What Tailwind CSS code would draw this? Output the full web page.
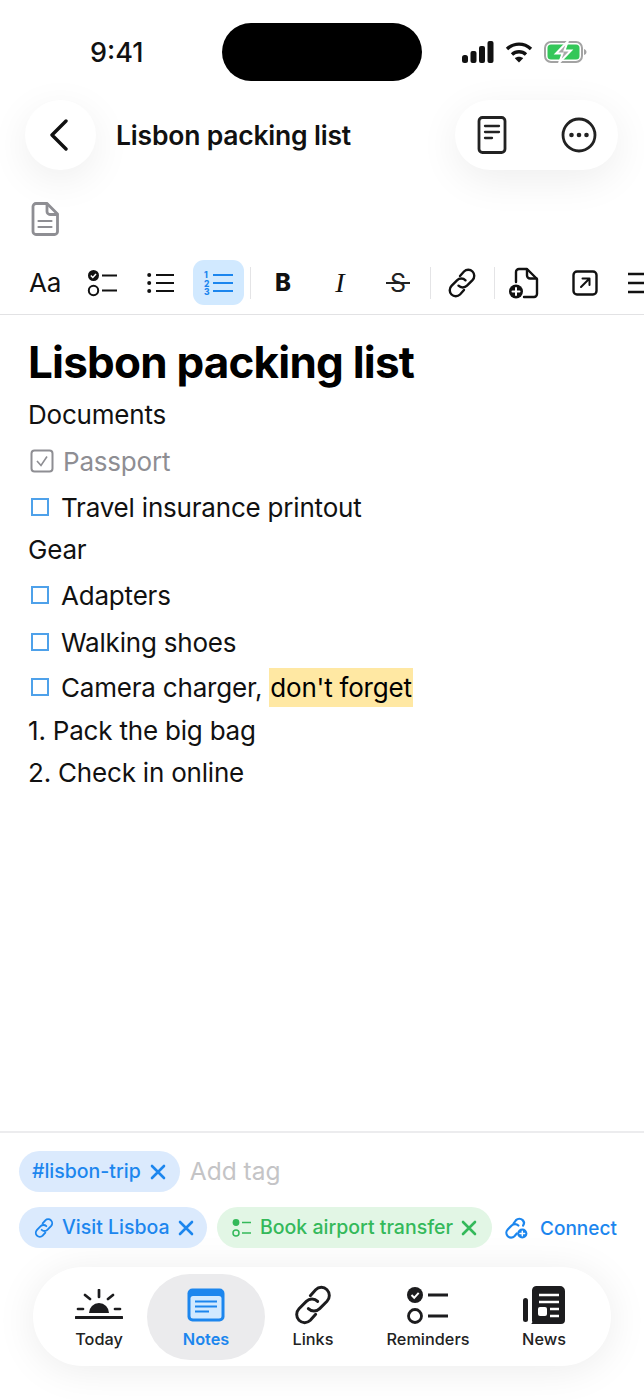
<!DOCTYPE html>
<html lang="en">
  <head>
    <meta charset="UTF-8" />
    <meta name="viewport" content="width=device-width, initial-scale=1.0" />
    <title>Lisbon packing list</title>
    <script src="https://cdn.jsdelivr.net/npm/@tailwindcss/browser@4"></script>
  </head>
  <body class="bg-white font-['Inter',sans-serif] text-black">
    <div class="w-[644px] h-[1400px] flex flex-col overflow-hidden">
      <!-- status bar -->
      <div class="h-[100px] shrink-0 pt-[23px] pl-[90px] pr-[57px] flex items-start">
        <span class="mt-[13px] w-[55px] text-[27px] leading-[33px] font-medium text-[#111]">9:41</span>
        <div class="ml-[77px] w-[200px] h-[58px] rounded-full bg-black"></div>
        <div class="ml-auto mt-[18px] flex items-center gap-[11px]">
          <svg width="32" height="22" viewBox="0 0 32 22" fill="#111">
            <rect x="0" y="14" width="6" height="8" rx="2.5" />
            <rect x="8.5" y="10" width="6" height="12" rx="2" />
            <rect x="17" y="5" width="6" height="17" rx="2" />
            <rect x="25.5" y="0" width="6" height="22" rx="2" />
          </svg>
          <svg width="28" height="22" viewBox="0 0 28 22" fill="none" stroke="#111" stroke-width="3.4">
            <path d="M2 8c7-6.500 17-6.500 24 0" />
            <path d="M7 13.500c4-3.700 10-3.700 14 0" />
            <path d="M14 21.500l-4.200-4.200c2.300-2 6.100-2 8.400 0z" fill="#111" stroke="none" />
          </svg>
          <svg width="43" height="22" viewBox="0 0 43 22" fill="none">
            <rect x="1" y="1" width="37" height="20" rx="6" stroke="#a3a3a3" stroke-width="2" />
            <rect x="3.500" y="3.500" width="32" height="15" rx="3.500" fill="#34c759" />
            <path d="M40 8v6c1.500-.5 2.500-1.500 2.500-3s-1-2.500-2.500-3z" fill="#a3a3a3" />
            <path d="M24 0L12 12.500h6.500L15 22l12-12.500h-6.500z" fill="#a9a9a9" stroke="#fff" stroke-width="2" />
          </svg>
        </div>
      </div>

      <!-- nav -->
      <div class="h-[70px] shrink-0 pl-[25px] pr-[26px] flex items-center">
        <button class="w-[71px] h-[70px] pr-[3px] rounded-full bg-white shadow-[0_10px_40px_rgba(0,0,0,0.07)] flex items-center justify-center">
          <svg width="20" height="32" viewBox="0 0 20 32" fill="none" stroke="#111" stroke-width="3.400" stroke-linecap="round" stroke-linejoin="round">
            <path d="M17 2L3 16l14 14" />
          </svg>
        </button>
        <span class="ml-[20px] text-[26.500px] leading-[34px] font-semibold tracking-[-0.2px] text-[#111]">Lisbon packing list</span>
        <div class="ml-auto w-[163px] h-[70px] rounded-full bg-white shadow-[0_10px_40px_rgba(0,0,0,0.07)] pl-[21px] pr-[21px] flex items-center justify-between">
          <svg width="32" height="38" viewBox="0 0 32 38" fill="none" stroke="#222" stroke-width="2.800" stroke-linecap="round">
            <rect x="3" y="1.500" width="26" height="35" rx="3.500" />
            <path d="M9 10h14M9 16h14M9 22h7" stroke-width="2.300" />
          </svg>
          <svg width="36" height="36" viewBox="0 0 36 36" fill="none">
            <circle cx="18" cy="18" r="16" stroke="#222" stroke-width="2.800" />
            <circle cx="10.500" cy="18" r="2.300" fill="#222" />
            <circle cx="18" cy="18" r="2.300" fill="#222" />
            <circle cx="25.500" cy="18" r="2.300" fill="#222" />
          </svg>
        </div>
      </div>

      <!-- note type icon -->
      <div class="h-[90px] shrink-0 pl-[31px] pt-[32px]">
        <svg width="28" height="34" viewBox="0 0 28 34" fill="none" stroke="#8e8e93" stroke-width="2.800" stroke-linecap="round" stroke-linejoin="round">
          <path d="M5 1.500h11L26.500 12v17.500a3 3 0 0 1-3 3H5a3 3 0 0 1-3-3v-25a3 3 0 0 1 3-3z" />
          <path d="M16 2v7.500a3 3 0 0 0 3 3h7" />
          <path d="M7.500 19h13M7.500 25h13" stroke-width="2.200" />
        </svg>
      </div>

      <!-- toolbar -->
      <div class="h-[55px] shrink-0 border-b border-[#e2e2e4] overflow-hidden">
        <div class="h-[45px] pl-[29px] flex items-center w-[680px]">
          <span class="w-[32px] text-[26px] leading-[30px] text-[#111] tracking-[-0.2px]">Aa</span>
          <svg class="ml-[26px]" width="32" height="28" viewBox="0 0 32 28" fill="none" stroke="#111">
            <circle cx="6.500" cy="6.500" r="5.500" fill="#111" stroke="none" />
            <path d="M3.800 6.500l2 2 3.200-3.500" stroke="#fff" stroke-width="1.500" />
            <circle cx="6.500" cy="21.500" r="4.700" stroke-width="2" />
            <path d="M15 6.500h15M15 21.500h15" stroke-width="2" />
          </svg>
          <svg class="ml-[28px]" width="28" height="22" viewBox="0 0 28 22" fill="#111" stroke="#111">
            <circle cx="2.200" cy="3" r="2" stroke="none" />
            <circle cx="2.200" cy="11" r="2" stroke="none" />
            <circle cx="2.200" cy="19" r="2" stroke="none" />
            <path d="M9 3h18M9 11h18M9 19h18" stroke-width="2" />
          </svg>
          <div class="ml-[18px] w-[51px] h-[45px] shrink-0 rounded-[11px] bg-[#d1e9ff] flex items-center justify-center">
            <svg width="30" height="28" viewBox="0 0 30 28" fill="none" stroke="#1c86ee">
              <text x="0" y="9" font-size="8.500" font-weight="800" fill="#1c86ee" stroke="none" font-family="Inter">1</text>
              <text x="0" y="17.500" font-size="8.500" font-weight="800" fill="#1c86ee" stroke="none" font-family="Inter">2</text>
              <text x="0" y="26" font-size="8.500" font-weight="800" fill="#1c86ee" stroke="none" font-family="Inter">3</text>
              <path d="M9 6h20M9 14h20M9 22h20" stroke-width="2" />
            </svg>
          </div>
          <div class="ml-[6px] w-px h-[32px] bg-[#e4e4e6]"></div>
          <span class="ml-[22px] w-[20px] text-center text-[24px] leading-[30px] font-extrabold text-[#111]">B</span>
          <span class="ml-[37px] w-[20px] text-center text-[28px] leading-[30px] italic font-['Liberation_Serif',serif] text-[#111]">I</span>
          <span class="relative ml-[36px] w-[24px] text-center text-[25px] leading-[30px] text-[#222]">S<span class="absolute left-0 right-0 top-[14px] h-[2px] bg-[#222]"></span></span>
          <div class="ml-[20px] w-px h-[32px] bg-[#e4e4e6]"></div>
          <svg class="ml-[16px]" width="30" height="30" viewBox="0 0 30 30" fill="none" stroke="#111" stroke-width="2.400" stroke-linecap="round">
            <path d="M13 8l4-4.500a6 6 0 0 1 8.500 0 6.300 6.300 0 0 1 0 8.700l-5.500 5.500a6 6 0 0 1-8.500 0" />
            <path d="M17 22l-4 4.500a6 6 0 0 1-8.500 0 6.300 6.300 0 0 1 0-8.700l5.500-5.500a6 6 0 0 1 8.500 0" />
          </svg>
          <div class="ml-[17px] w-px h-[32px] bg-[#e4e4e6]"></div>
          <svg class="ml-[14px]" width="30" height="32" viewBox="0 0 30 32" fill="none" stroke="#111" stroke-width="2.400" stroke-linecap="round" stroke-linejoin="round">
            <path d="M7 15V5a3 3 0 0 1 3-3h8l10 10v15a3 3 0 0 1-3 3H15" />
            <path d="M18 2.500v6a3 3 0 0 0 3 3h6.500" />
            <circle cx="7" cy="24.500" r="7" fill="#111" stroke="none" />
            <path d="M7 21v7M3.500 24.500h7" stroke="#fff" stroke-width="2" />
          </svg>
          <svg class="ml-[33px]" width="26" height="26" viewBox="0 0 26 26" fill="none" stroke="#111" stroke-width="2.400" stroke-linecap="round" stroke-linejoin="round">
            <rect x="1.500" y="1.500" width="23" height="23" rx="3.500" />
            <path d="M9 17l8-8M10.500 8.500H17.500V15" stroke-width="2" />
          </svg>
          <svg class="ml-[30px]" width="30" height="24" viewBox="0 0 30 24" fill="none" stroke="#111" stroke-width="2.400">
            <path d="M0 3h30M0 12h30M0 21h30" />
          </svg>
        </div>
      </div>

      <!-- note body -->
      <div class="flex-1 pl-[28px] text-[26px] text-[#111] tracking-[-0.2px]">
        <h1 class="pt-[19px] text-[44px] leading-[56px] font-bold tracking-[-0.8px] text-black">Lisbon packing list</h1>
        <p class="h-[41px] leading-[41px] mt-[4px]">Documents</p>
        <div class="h-[46px] mt-[3px] flex items-center text-[#8e8e93] gap-[9px] pl-[2px]">
          <svg width="24" height="24" viewBox="0 0 24 24" fill="none" stroke="#8e8e93" stroke-width="2">
            <rect x="1.500" y="1.500" width="21" height="21" rx="3" />
            <path d="M7 12l4 4.500 6-9" stroke-width="1.600" />
          </svg>
          <span>Passport</span>
        </div>
        <div class="h-[46px] flex items-center gap-[12px] pl-[3px]">
          <span class="w-[18px] h-[18px] border-2 border-[#4ea1ea]"></span>
          <span>Travel insurance printout</span>
        </div>
        <p class="h-[38px] leading-[38px] mt-[1px]">Gear</p>
        <div class="h-[46px] flex items-center gap-[12px] pl-[3px] mt-[3px]">
          <span class="w-[18px] h-[18px] border-2 border-[#4ea1ea]"></span>
          <span>Adapters</span>
        </div>
        <div class="h-[46px] flex items-center gap-[12px] pl-[3px] mt-[1px]">
          <span class="w-[18px] h-[18px] border-2 border-[#4ea1ea]"></span>
          <span>Walking shoes</span>
        </div>
        <div class="h-[46px] flex items-center gap-[12px] pl-[3px] mt-[-1px]">
          <span class="w-[18px] h-[18px] border-2 border-[#4ea1ea]"></span>
          <span>Camera charger, <span class="inline-block h-[39px] leading-[39px] px-[1px] bg-[#ffe8a3] text-black">don't forget</span></span>
        </div>
        <p class="h-[42px] leading-[42px]">1. Pack the big bag</p>
        <p class="h-[42px] leading-[42px]">2. Check in online</p>
      </div>

      <!-- tags and connections -->
      <div class="h-[269px] shrink-0 border-t-2 border-[#ececee] pt-[18px] whitespace-nowrap">
        <div class="pl-[19px] flex items-center">
          <div class="h-[41px] rounded-full bg-[#dbeafd] pl-[13px] pr-[14px] flex items-center gap-[9px] text-[19.500px] font-medium text-[#1c86ee]">
            <span>#lisbon-trip</span>
            <svg width="16" height="16" viewBox="0 0 16 16" stroke="#1c86ee" stroke-width="2.600" stroke-linecap="round"><path d="M2 2l12 12M14 2L2 14" /></svg>
          </div>
          <span class="ml-[10px] text-[24.500px] text-[#c4c4c6]">Add tag</span>
        </div>
        <div class="mt-[15px] pl-[19px] flex items-center">
          <div class="h-[41px] w-[188px] shrink-0 rounded-full bg-[#dbeafd] pl-[15px] flex items-center text-[19.500px] font-medium text-[#1c86ee]">
            <svg width="20" height="20" viewBox="0 0 30 30" fill="none" stroke="#1c86ee" stroke-width="2.800" stroke-linecap="round">
              <path d="M13 8l4-4.500a6 6 0 0 1 8.500 0 6.300 6.300 0 0 1 0 8.700l-5.500 5.500a6 6 0 0 1-8.500 0" />
              <path d="M17 22l-4 4.500a6 6 0 0 1-8.500 0 6.300 6.300 0 0 1 0-8.700l5.500-5.500a6 6 0 0 1 8.500 0" />
            </svg>
            <span class="ml-[8px]">Visit Lisboa</span>
            <svg class="ml-[8px]" width="16" height="16" viewBox="0 0 16 16" stroke="#1c86ee" stroke-width="2.600" stroke-linecap="round"><path d="M2 2l12 12M14 2L2 14" /></svg>
          </div>
          <div class="ml-[10px] h-[41px] w-[275px] shrink-0 rounded-full bg-[#e2f6e5] pl-[15px] flex items-center text-[19.500px] font-medium text-[#34b95a]">
            <svg width="20" height="20" viewBox="0 0 20 20" fill="none" stroke="#34b95a">
              <circle cx="4" cy="4.500" r="3.400" fill="#34b95a" stroke="none" />
              <circle cx="4" cy="15" r="3" stroke-width="1.500" />
              <path d="M10 4.500h9M10 15h9" stroke-width="1.500" />
            </svg>
            <span class="ml-[8px]">Book airport transfer</span>
            <svg class="ml-[8px]" width="16" height="16" viewBox="0 0 16 16" stroke="#34b95a" stroke-width="2.600" stroke-linecap="round"><path d="M2 2l12 12M14 2L2 14" /></svg>
          </div>
          <div class="ml-[12px] flex items-center gap-[12px] text-[19px] font-medium text-[#1c86ee]">
            <svg width="24" height="22" viewBox="0 0 30 28" fill="none" stroke="#1c86ee" stroke-width="2.800" stroke-linecap="round">
              <path d="M12 8l3-4a6 6 0 0 1 8.500 0c2 2 2 5 .5 7" />
              <path d="M16 21l-3 3.500a6 6 0 0 1-8.500 0 6.300 6.300 0 0 1 0-8.700l5-5a6 6 0 0 1 8.500 0" />
              <circle cx="23" cy="21" r="6.500" fill="#1c86ee" stroke="none" />
              <path d="M23 18v6M20 21h6" stroke="#fff" stroke-width="1.800" />
            </svg>
            <span class="mt-[3px]">Connect</span>
          </div>
        </div>

        <!-- tab bar -->
        <div class="mt-[19px] mx-[33px] h-[99px] rounded-full bg-white shadow-[0_4px_40px_rgba(0,0,0,0.08)] pl-[36px] flex items-center text-[16.300px] leading-[20px] font-medium text-[#222]">
          <div class="w-[60px] shrink-0 flex flex-col items-center">
            <div class="h-[40px] flex items-center">
              <svg width="48" height="32" viewBox="0 0 48 32" fill="none" stroke="#1c1c1e" stroke-width="2.700" stroke-linecap="round">
                <path d="M24 1v7M10 6l5 4M38 6l-5 4M3 20h5M40 20h5" />
                <path d="M14 24a10 10 0 0 1 20 0z" fill="#1c1c1e" stroke="none" />
                <path d="M1 28.500h46" stroke-width="3" />
              </svg>
            </div>
            <span class="mt-[4px]">Today</span>
          </div>
          <div class="ml-[18px] w-[118px] h-[86px] shrink-0 rounded-full bg-[#ebebed] flex flex-col items-center justify-center font-semibold text-[#1c86ee]">
            <div class="h-[40px] flex items-center">
              <svg width="38" height="34" viewBox="0 0 38 34" fill="none">
                <rect x="0.500" y="0.500" width="37" height="33" rx="5" fill="#1c86ee" />
                <rect x="3.500" y="8" width="31" height="22.500" rx="2.500" fill="#d1e9ff" />
                <path d="M8 13.500h22M8 18.500h22M8 23.500h14" stroke="#1c86ee" stroke-width="2.200" />
              </svg>
            </div>
            <span class="mt-[4px]">Notes</span>
          </div>
          <div class="ml-[27px] w-[42px] shrink-0 flex flex-col items-center">
            <div class="h-[40px] flex items-center">
              <svg width="40" height="40" viewBox="0 0 30 30" fill="none" stroke="#1c1c1e" stroke-width="2.200" stroke-linecap="round">
                <path d="M13 8l4-4.500a6 6 0 0 1 8.500 0 6.300 6.300 0 0 1 0 8.700l-5.500 5.500a6 6 0 0 1-8.500 0" />
                <path d="M17 22l-4 4.500a6 6 0 0 1-8.500 0 6.300 6.300 0 0 1 0-8.700l5.500-5.500a6 6 0 0 1 8.500 0" />
              </svg>
            </div>
            <span class="mt-[4px]">Links</span>
          </div>
          <div class="ml-[52px] w-[84px] shrink-0 flex flex-col items-center">
            <div class="h-[40px] flex items-center">
              <svg width="42" height="38" viewBox="0 0 42 38" fill="none" stroke="#1c1c1e">
                <circle cx="8" cy="9" r="8" fill="#1c1c1e" stroke="none" />
                <path d="M4.500 9l2.700 2.800 4.500-5" stroke="#fff" stroke-width="2" />
                <circle cx="8" cy="30" r="6.500" stroke-width="2.800" />
                <path d="M21 9h20M21 30h20" stroke-width="3" />
              </svg>
            </div>
            <span class="mt-[4px]">Reminders</span>
          </div>
          <div class="ml-[53px] w-[42px] shrink-0 flex flex-col items-center">
            <div class="h-[40px] flex items-center">
              <svg width="42" height="38" viewBox="0 0 42 38" fill="none">
                <rect x="0" y="12" width="5" height="24" rx="2.500" fill="#1c1c1e" />
                <path d="M13 0h24a5 5 0 0 1 5 5v29a4 4 0 0 1-4 4H7a2 2 0 0 0 2-3V5a5 5 0 0 1 4-5z" fill="#1c1c1e" />
                <path d="M16 9h20M16 16h20M27 23h9M27 30h9" stroke="#fff" stroke-width="2.400" />
                <rect x="15" y="21" width="9" height="9" rx="2" fill="#fff" />
              </svg>
            </div>
            <span class="mt-[4px]">News</span>
          </div>
        </div>
      </div>
    </div>
  </body>
</html>
